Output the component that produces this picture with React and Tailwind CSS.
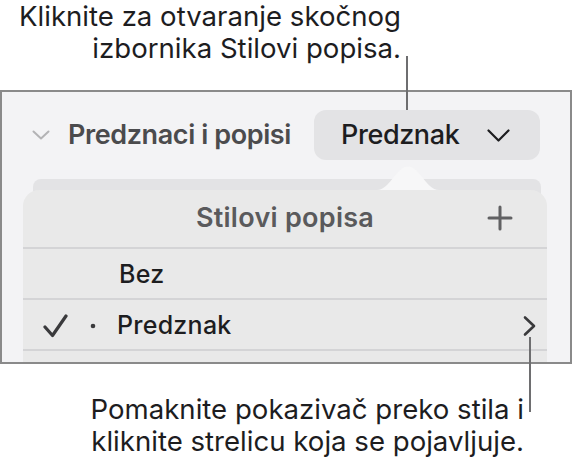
export default function App() {
  return (
    <div className="relative w-[575px] h-[463px] overflow-hidden bg-white font-['Inter',sans-serif] text-[#1d1d1f]">
      {/* top callout */}
      <div className="h-[90px]">
        <p className="w-[401px] text-right text-[27.6px] leading-[32px]">
          Kliknite za otvaranje skočnog
          <br />
          izbornika Stilovi popisa.
        </p>
      </div>

      {/* screenshot frame */}
      <div className="w-[572px] h-[274px] border-2 border-[#8a8a8a] bg-[#f3f3f5] overflow-hidden">
        <div className="flex items-center pt-[18px] pl-[30px]">
          <svg width="18" height="10" viewBox="0 0 18 10" className="shrink-0">
            <path d="M1.5 1.5 L9 8.5 L16.5 1.5" fill="none" stroke="#b3b3b5" strokeWidth="2" strokeLinecap="round" strokeLinejoin="round" />
          </svg>
          <span className="ml-[18px] w-[246px] text-[27px] font-semibold tracking-[-0.015em] text-[#4b4b4d]">Predznaci i popisi</span>
          <div className="flex h-[50px] w-[226px] items-center justify-between rounded-[12px] bg-[#e3e3e5] pl-[27px] pr-[30px]">
            <span className="text-[27px] font-medium tracking-[-0.015em] text-[#1d1d1f]">Predznak</span>
            <svg width="23" height="13" viewBox="0 0 23 13">
              <path d="M1.5 1.5 L11.5 11.5 L21.5 1.5" fill="none" stroke="#1d1d1f" strokeWidth="2.2" strokeLinecap="round" strokeLinejoin="round" />
            </svg>
          </div>
        </div>

        {/* card partly hidden under the popover */}
        <div className="mt-[19px] ml-[31px] w-[508px] h-[40px] rounded-t-[8px] bg-[#e3e3e5]" />

        {/* popover */}
        <div className="relative -mt-[29px] ml-[21px] w-[524px] rounded-t-[16px] bg-[#e9e9e9]">
          <div className="relative flex h-[57px] items-center justify-center">
            <span className="text-[27px] font-semibold tracking-[0.01em] text-[#5a5a5c]">Stilovi popisa</span>
            <svg width="26" height="26" viewBox="0 0 26 26" className="absolute right-[34px] top-[15px]">
              <path d="M13 2 V24 M2 13 H24" stroke="#616163" strokeWidth="3" strokeLinecap="round" />
            </svg>
          </div>
          <div className="h-[2px] bg-[#d4d4d6]" />
          <div className="flex h-[49px] items-center pl-[96px] pt-[3px]">
            <span className="text-[25px] font-medium tracking-[0.01em] text-[#1d1d1f]">Bez</span>
          </div>
          <div className="h-[2px] bg-[#d4d4d6]" />
          <div className="flex h-[49px] items-center pt-[3px]">
            <svg width="25" height="24" viewBox="0 0 25 24" className="ml-[20px] shrink-0">
              <path d="M2 13 L9.5 21.5 L23 2" fill="none" stroke="#3a3a3c" strokeWidth="3.2" strokeLinecap="round" strokeLinejoin="round" />
            </svg>
            <svg width="6" height="6" viewBox="0 0 6 6" className="ml-[22px] shrink-0">
              <circle cx="3" cy="3" r="2.3" fill="#3a3a3c" />
            </svg>
            <span className="ml-[21px] text-[25px] font-medium tracking-[0.01em] text-[#1d1d1f]">Predznak</span>
            <svg width="15" height="22" viewBox="0 0 15 22" className="ml-auto mr-[10px] shrink-0">
              <path d="M3 2.5 L12 11 L3 19.5" fill="none" stroke="#3a3a3c" strokeWidth="2.6" strokeLinecap="round" strokeLinejoin="round" />
            </svg>
          </div>
          <div className="h-[2px] bg-[#d4d4d6]" />
          <div className="h-[40px]" />
        </div>
      </div>

      {/* popover arrow */}
      <svg width="62" height="26" viewBox="0 0 62 26" className="absolute left-[377px] top-[165px]">
        <path d="M0 25 C13 25 19 1.5 31 1.5 C43 1.5 49 25 62 25 Z" fill="#f7f7f8" />
      </svg>

      {/* callout lines */}
      <div className="absolute left-[406px] top-[56px] h-[54px] w-[2px] bg-[#6e6e70]" />
      <div className="absolute left-[529px] top-[337px] h-[75px] w-[2px] bg-[#6e6e70]" />

      {/* bottom callout */}
      <p className="mt-[29px] w-[524px] text-right text-[27.6px] leading-[32px]">
        Pomaknite pokazivač preko stila i
        <br />
        kliknite strelicu koja se pojavljuje.
      </p>
    </div>
  )
}
